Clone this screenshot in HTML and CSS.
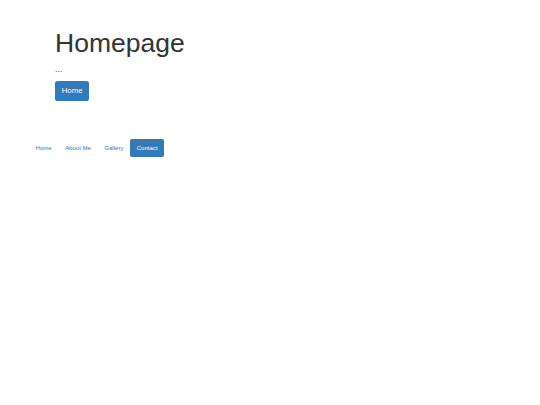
FILE: index.html
```html
<!DOCTYPE html>
<html>
<head>
<meta charset="utf-8">
<title>Homepage</title>
<link rel="stylesheet" href="styles.css">
</head>
<body>
<div class="jumbotron">
  <h1 class="title">Homepage</h1>
  <p class="lead">...</p>
  <a class="btn" href="#">Home</a>
</div>
<ul class="pills">
  <li><a class="pill" href="#">Home</a></li>
  <li><a class="pill" href="#">About Me</a></li>
  <li><a class="pill" href="#">Gallery</a></li>
  <li><a class="pill active" href="#">Contact</a></li>
</ul>
</body>
</html>
```

FILE: styles.css
```css
html, body {
  margin: 0;
  padding: 0;
  background: #ffffff;
  font-family: "Liberation Sans", Arial, Helvetica, sans-serif;
  color: #333333;
}
.jumbotron {
  padding: 28px 0 0 55px;
  display: flex;
  flex-direction: column;
  align-items: flex-start;
}
.title {
  margin: 0;
  font-size: 26.5px;
  line-height: 30px;
  font-weight: 400;
  color: #333333;
}
.lead {
  margin: 4.7px 0 0 0;
  font-size: 9px;
  line-height: 12.6px;
  color: #555555;
}
.btn {
  margin-top: 5.7px;
  display: inline-block;
  font-size: 7.8px;
  line-height: 11.2px;
  padding: 4.3px 6.7px;
  background: #337ab7;
  border-radius: 2.6px;
  color: #ffffff;
  text-decoration: none;
}
.pills {
  list-style: none;
  margin: 38.5px 0 0 0;
  padding: 0 0 0 29.3px;
  display: flex;
  gap: 0.8px;
}
.pill {
  display: block;
  font-size: 6.1px;
  line-height: 8.8px;
  padding: 4.3px 6.2px;
  border-radius: 1.7px;
  color: #337ab7;
  text-decoration: none;
}
.pill.active {
  background: #337ab7;
  color: #ffffff;
}
```
